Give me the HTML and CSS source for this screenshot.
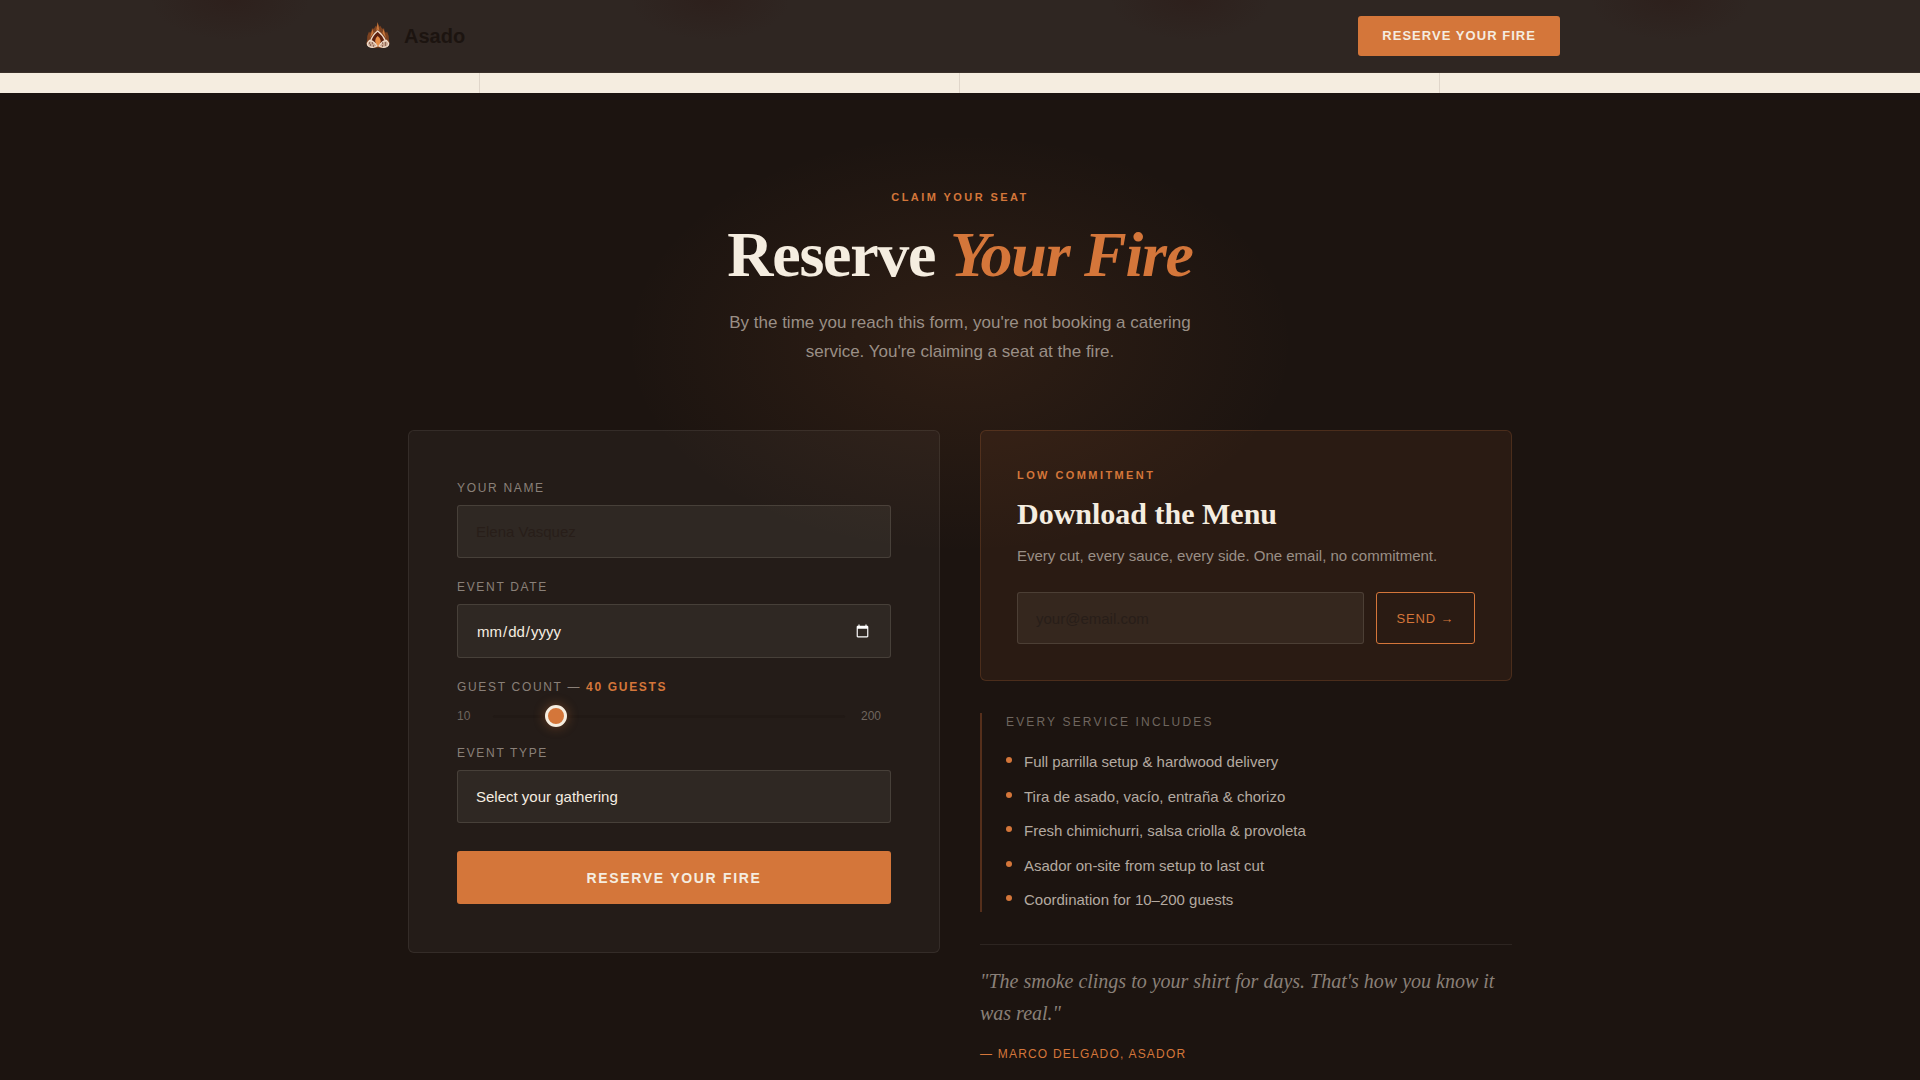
FILE: index.html
```html
<!DOCTYPE html>
<html lang="en">
<head>
    <meta charset="UTF-8">
    <meta name="viewport" content="width=device-width, initial-scale=1.0">
    <title>Asado — Reserve Your Fire</title>
    <link rel="stylesheet" href="styles.css">
</head>
<body>
    <header class="site-header">
        <div class="nav">
            <a class="logo" href="#">
                <svg class="logo-mark" viewBox="0 1 36 36" aria-hidden="true">
                    <path d="M17.700 6 Q18 8 20 10 L20.500 8.500 Q21 11 23 12 L24 11 Q24 14 26 16 L27 14.500 Q29.500 19 29 24 Q31 27 27 29.500 Q23 32 18 30.500 Q13 32 9 29.500 Q5 27 7 24 Q6.500 19 9 14.500 L10 16 Q12 14 12 11 L13 12 Q15 11 15.500 8.500 L16 10 Q17.500 8 17.700 6Z" fill="#7d4220"/>
                    <path d="M17.700 5 L19.500 14 L17.700 12.500 L16.200 14Z M12.500 12 L13.500 16 L10 21Z M23.500 12 L22.500 16 L26 21Z" fill="#c9783c"/>
                    <path d="M17.700 14 Q25 20 23.500 24 Q20 29 18 29 Q16 29 12.500 24 Q11 20 17.700 14Z" fill="#5c210f"/>
                    <path d="M17.700 19 Q23.500 23 18 30 Q12.500 23 17.700 19Z" fill="#e88f48"/>
                    <path d="M10.500 24 Q12.500 18 17.700 14 Q23 18 25.500 24" fill="none" stroke="#f0dccb" stroke-width="1.300"/>
                    <path d="M9.500 23.500 Q5.500 27 9 29.500 Q13 31.500 17 29 Q14 24 9.500 23.500Z M26.500 23.500 Q30.500 27 27 29.500 Q23 31.500 19 29 Q22 24 26.500 23.500Z" fill="#c9a690" stroke="#f0dccb" stroke-width="1.300"/>
                    <path d="M9 26h1m2 0h1m-3 2h1m2 1h1m11-3h1m-4 0h1m2 2h1m-4 1h1" stroke="#5c2f20" stroke-width="1.200"/>
                </svg>
                <span>Asado</span>
            </a>
            <a class="nav-cta" href="#reserve">Reserve Your Fire</a>
        </div>
    </header>

    <div class="gallery-strip">
        <div></div>
        <div></div>
        <div></div>
        <div></div>
    </div>

    <main class="reserve" id="reserve">
        <div class="intro">
            <p class="eyebrow">Claim Your Seat</p>
            <h1>Reserve <em>Your Fire</em></h1>
            <p class="lead">By the time you reach this form, you're not booking a catering service. You're claiming a seat at the fire.</p>
        </div>

        <div class="columns">
            <form class="booking">
                <div class="field">
                    <label for="name">Your Name</label>
                    <input type="text" id="name" name="name" placeholder="Elena Vasquez">
                </div>
                <div class="field">
                    <label for="date">Event Date</label>
                    <input type="date" id="date" name="date">
                </div>
                <div class="field">
                    <label for="guests">Guest Count — <strong id="guestCount">40 guests</strong></label>
                    <div class="range-row">
                        <span class="range-min">10</span>
                        <input type="range" id="guests" name="guests" min="10" max="200" value="40">
                        <span class="range-max">200</span>
                    </div>
                </div>
                <div class="field">
                    <label for="type">Event Type</label>
                    <select id="type" name="type">
                        <option value="">Select your gathering</option>
                        <option value="wedding">Wedding</option>
                        <option value="corporate">Corporate</option>
                        <option value="private">Private party</option>
                    </select>
                </div>
                <button type="submit" class="submit">Reserve Your Fire</button>
            </form>

            <div class="side">
                <form class="menu-card">
                    <p class="eyebrow">Low Commitment</p>
                    <h2>Download the Menu</h2>
                    <p class="menu-text">Every cut, every sauce, every side. One email, no commitment.</p>
                    <div class="menu-row">
                        <input type="email" name="email" placeholder="your@email.com" aria-label="Email">
                        <button type="submit">Send →</button>
                    </div>
                </form>

                <div class="includes">
                    <h3>Every service includes</h3>
                    <ul>
                        <li>Full parrilla setup &amp; hardwood delivery</li>
                        <li>Tira de asado, vacío, entraña &amp; chorizo</li>
                        <li>Fresh chimichurri, salsa criolla &amp; provoleta</li>
                        <li>Asador on-site from setup to last cut</li>
                        <li>Coordination for 10–200 guests</li>
                    </ul>
                </div>

                <figure class="quote">
                    <blockquote>"The smoke clings to your shirt for days. That's how you know it was real."</blockquote>
                    <figcaption>— Marco Delgado, Asador</figcaption>
                </figure>
            </div>
        </div>
    </main>

    <script>
        const guests = document.getElementById('guests');
        guests.addEventListener('input', function() {
            document.getElementById('guestCount').textContent = guests.value + ' guests';
        });
    </script>
</body>
</html>
```

FILE: styles.css
```css
:root {
    --char: #1c1410;
    --cream: #f5ede0;
    --ember: #d4763a;
}
* {
    box-sizing: border-box;
    margin: 0;
    padding: 0;
}
body {
    background: var(--char);
    color: var(--cream);
    font-family: "Liberation Sans", Arial, sans-serif;
    font-size: 15px;
    line-height: 1.5;
    overflow-x: hidden;
}
input, select, button {
    font-family: inherit;
}

/* header */
.site-header {
    padding: 16px 24px;
    border-bottom: 1px solid #3a302a;
    background:
        radial-gradient(ellipse 80px 40px at 12% 0, rgba(44, 28, 24, 0.6), transparent),
        radial-gradient(ellipse 80px 40px at 37% 0, rgba(44, 28, 24, 0.6), transparent),
        radial-gradient(ellipse 80px 40px at 62% 0, rgba(44, 28, 24, 0.6), transparent),
        radial-gradient(ellipse 80px 40px at 87% 0, rgba(44, 28, 24, 0.6), transparent),
        #2f2622;
}
.nav {
    display: flex;
    align-items: center;
    justify-content: space-between;
    max-width: 1200px;
    margin: 0 auto;
}
.logo {
    display: flex;
    align-items: center;
    gap: 8px;
    color: var(--char);
    font-size: 20px;
    font-weight: bold;
    text-decoration: none;
}
.logo-mark {
    width: 36px;
    height: 36px;
}
.nav-cta {
    padding: 0 24px;
    border-radius: 3px;
    background: var(--ember);
    color: var(--cream);
    font-size: 13px;
    font-weight: bold;
    line-height: 40px;
    letter-spacing: 0.08em;
    text-transform: uppercase;
    text-decoration: none;
}
.gallery-strip {
    display: grid;
    grid-template-columns: repeat(4, 1fr);
    height: 20px;
    background: var(--cream);
}
.gallery-strip div {
    border-right: 1px solid #e0d6ca;
}
.gallery-strip div:last-child {
    border-right: none;
}

/* reserve */
.reserve {
    padding: 96px 24px;
    background: radial-gradient(ellipse 335px 210px at 50% 250px, rgba(212, 118, 58, 0.1), transparent);
}
.intro {
    margin-bottom: 64px;
    text-align: center;
}
.eyebrow {
    color: var(--ember);
    font-size: 11px;
    font-weight: bold;
    line-height: 17px;
    letter-spacing: 0.22em;
    text-transform: uppercase;
}
h1 {
    margin: 16px 0 20px;
    font-family: "Liberation Serif", serif;
    font-size: 64px;
    line-height: 66px;
    letter-spacing: -0.02em;
}
h1 em {
    color: var(--ember);
}
.lead {
    max-width: 480px;
    margin: 0 auto;
    color: #9a8f86;
    font-size: 17px;
    line-height: 29px;
}
.columns {
    display: grid;
    grid-template-columns: 1fr 1fr;
    align-items: start;
    gap: 40px;
    max-width: 1104px;
    margin: 0 auto;
}

/* booking form */
.booking {
    padding: 48px;
    border: 1px solid rgba(245, 237, 224, 0.08);
    border-radius: 6px;
    background: rgba(245, 237, 224, 0.04);
}
.field {
    margin-bottom: 20px;
}
.field label {
    display: block;
    margin-bottom: 8px;
    color: #8a8078;
    font-size: 12px;
    line-height: 18px;
    letter-spacing: 0.14em;
    text-transform: uppercase;
}
.field strong {
    color: var(--ember);
}
input[type="text"], input[type="date"], input[type="email"], select {
    display: block;
    width: 100%;
    padding: 17px 18px;
    border: 1px solid rgba(245, 237, 224, 0.12);
    border-radius: 3px;
    outline: none;
    background: rgba(245, 237, 224, 0.06);
    color: var(--cream);
    font-size: 15px;
    appearance: none;
}
input::placeholder {
    color: #281e19;
}
input[type="date"] {
    padding: 16px 18px;
    height: 54px;
    color-scheme: dark;
}
.range-row {
    display: flex;
    align-items: center;
    gap: 16px;
    height: 20px;
    padding-top: 4px;
    color: #6f665f;
    font-size: 12px;
}
.range-min {
    width: 20px;
}
.range-max {
    width: 30px;
}
input[type="range"] {
    flex: 1;
    height: 3px;
    border-radius: 2px;
    background: #211915;
    appearance: none;
}
input[type="range"]::-webkit-slider-thumb {
    width: 22px;
    height: 22px;
    border: 3px solid var(--cream);
    border-radius: 50%;
    background: var(--ember);
    box-shadow: 0 0 12px rgba(212, 118, 58, 0.4);
    appearance: none;
}
.submit {
    width: 100%;
    height: 53px;
    margin-top: 8px;
    border: none;
    border-radius: 3px;
    background: var(--ember);
    color: var(--cream);
    font-size: 14px;
    font-weight: bold;
    letter-spacing: 0.12em;
    text-transform: uppercase;
}

/* side column */
.side {
    display: flex;
    flex-direction: column;
    gap: 32px;
}
.menu-card {
    padding: 36px;
    border: 1px solid rgba(212, 118, 58, 0.2);
    border-radius: 6px;
    background: rgba(212, 118, 58, 0.08);
}
.menu-card h2 {
    margin: 12px 0;
    font-family: "Liberation Serif", serif;
    font-size: 30px;
    line-height: 36px;
}
.menu-text {
    margin-bottom: 24px;
    color: #9a8f86;
    line-height: 24px;
}
.menu-row {
    display: flex;
    gap: 12px;
    height: 52px;
}
.menu-row button {
    padding: 0 20px;
    border: 1px solid var(--ember);
    border-radius: 3px;
    background: none;
    color: var(--ember);
    font-size: 13px;
    letter-spacing: 0.06em;
    text-transform: uppercase;
    white-space: nowrap;
}
.includes {
    padding-left: 24px;
    border-left: 2px solid #552f1b;
}
.includes h3 {
    margin-bottom: 20px;
    color: #6f665f;
    font-size: 12px;
    font-weight: normal;
    line-height: 18px;
    letter-spacing: 0.18em;
    text-transform: uppercase;
}
.includes ul {
    display: grid;
    gap: 12px;
    list-style: none;
}
.includes li {
    display: flex;
    gap: 12px;
    color: #b4aaa0;
}
.includes li::before {
    content: "";
    width: 6px;
    height: 6px;
    margin-top: 6px;
    border-radius: 50%;
    background: var(--ember);
}
.quote {
    padding-top: 20px;
    border-top: 1px solid #2d2521;
}
.quote blockquote {
    margin-bottom: 16px;
    color: #8a8078;
    font-family: "Liberation Serif", serif;
    font-size: 20px;
    font-style: italic;
    line-height: 32px;
}
.quote figcaption {
    color: var(--ember);
    font-size: 12px;
    line-height: 18px;
    letter-spacing: 0.1em;
    text-transform: uppercase;
}
```
